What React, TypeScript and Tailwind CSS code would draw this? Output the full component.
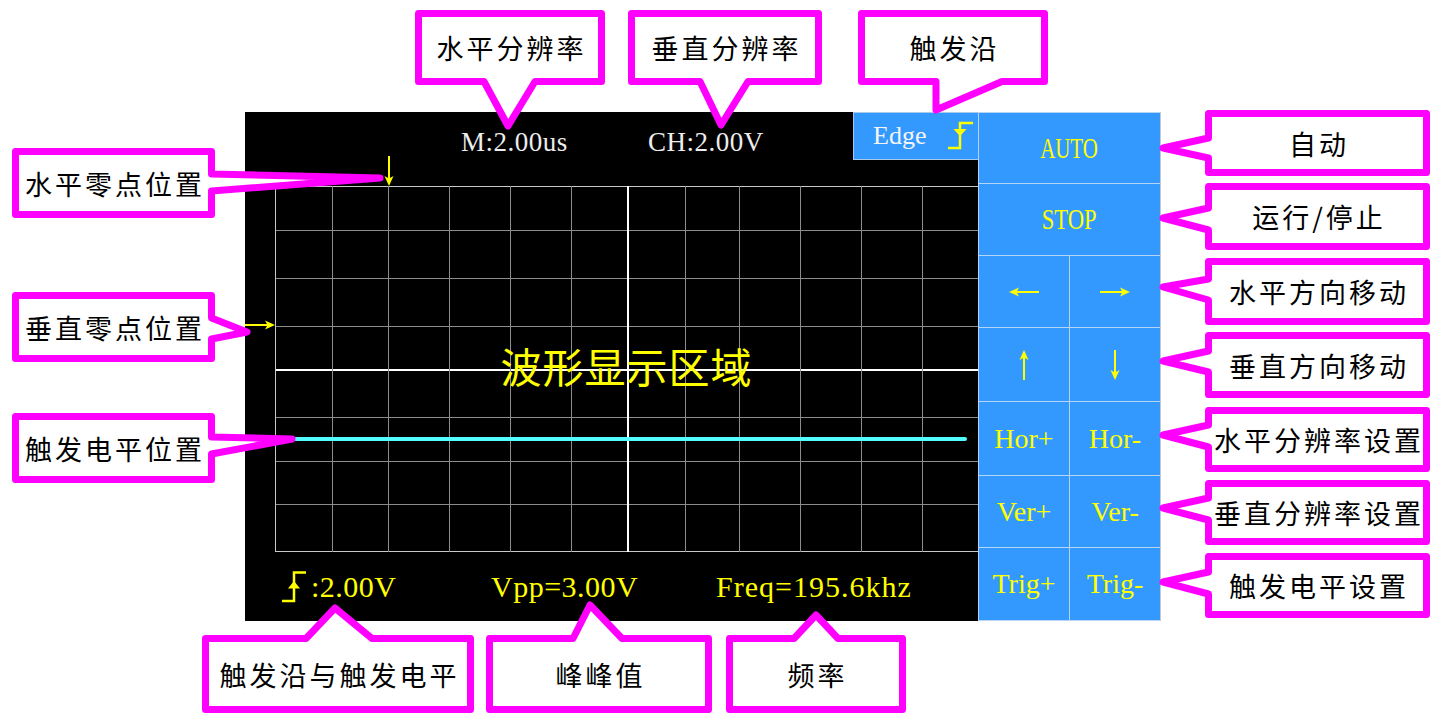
import React from "react";

type Side = "top" | "bottom" | "left" | "right";

type Callout = {
  text: string;
  x: number;
  y: number;
  w: number;
  h: number;
  pos: string;
  side: Side;
  b1: number;
  b2: number;
  tx: number;
  ty: number;
};

const callouts: Callout[] = [
  { text: "水平分辨率", x: 415, y: 10, w: 190, h: 75, pos: "left-[415px] top-[10px] w-[190px] h-[75px]", side: "bottom", b1: 484, b2: 535, tx: 508, ty: 126 },
  { text: "垂直分辨率", x: 628, y: 10, w: 194, h: 75, pos: "left-[628px] top-[10px] w-[194px] h-[75px]", side: "bottom", b1: 700, b2: 748, tx: 721, ty: 125 },
  { text: "触发沿", x: 858, y: 10, w: 190, h: 75, pos: "left-[858px] top-[10px] w-[190px] h-[75px]", side: "bottom", b1: 936, b2: 1002, tx: 936, ty: 110 },
  { text: "自动", x: 1205, y: 110, w: 225, h: 66, pos: "left-[1205px] top-[110px] w-[225px] h-[66px]", side: "left", b1: 138, b2: 158, tx: 1163, ty: 148 },
  { text: "运行/停止", x: 1205, y: 183, w: 225, h: 67, pos: "left-[1205px] top-[183px] w-[225px] h-[67px]", side: "left", b1: 208, b2: 230, tx: 1163, ty: 218 },
  { text: "水平方向移动", x: 1205, y: 258, w: 225, h: 67, pos: "left-[1205px] top-[258px] w-[225px] h-[67px]", side: "left", b1: 279, b2: 300, tx: 1163, ty: 287 },
  { text: "垂直方向移动", x: 1205, y: 332, w: 225, h: 66, pos: "left-[1205px] top-[332px] w-[225px] h-[66px]", side: "left", b1: 351, b2: 372, tx: 1163, ty: 361 },
  { text: "水平分辨率设置", x: 1205, y: 407, w: 225, h: 65, pos: "left-[1205px] top-[407px] w-[225px] h-[65px]", side: "left", b1: 425, b2: 447, tx: 1163, ty: 435 },
  { text: "垂直分辨率设置", x: 1205, y: 480, w: 225, h: 65, pos: "left-[1205px] top-[480px] w-[225px] h-[65px]", side: "left", b1: 498, b2: 520, tx: 1163, ty: 508 },
  { text: "触发电平设置", x: 1205, y: 553, w: 225, h: 65, pos: "left-[1205px] top-[553px] w-[225px] h-[65px]", side: "left", b1: 572, b2: 594, tx: 1163, ty: 582 },
  { text: "水平零点位置", x: 12, y: 148, w: 203, h: 70, pos: "left-[12px] top-[148px] w-[203px] h-[70px]", side: "right", b1: 174, b2: 191, tx: 380, ty: 178 },
  { text: "垂直零点位置", x: 12, y: 292, w: 203, h: 70, pos: "left-[12px] top-[292px] w-[203px] h-[70px]", side: "right", b1: 318, b2: 339, tx: 247, ty: 332 },
  { text: "触发电平位置", x: 12, y: 413, w: 203, h: 70, pos: "left-[12px] top-[413px] w-[203px] h-[70px]", side: "right", b1: 437, b2: 454, tx: 292, ty: 439 },
  { text: "触发沿与触发电平", x: 202, y: 635, w: 272, h: 78, pos: "left-[202px] top-[635px] w-[272px] h-[78px]", side: "top", b1: 306, b2: 372, tx: 335, ty: 608 },
  { text: "峰峰值", x: 486, y: 635, w: 226, h: 78, pos: "left-[486px] top-[635px] w-[226px] h-[78px]", side: "top", b1: 573, b2: 622, tx: 590, ty: 605 },
  { text: "频率", x: 726, y: 635, w: 180, h: 78, pos: "left-[726px] top-[635px] w-[180px] h-[78px]", side: "top", b1: 794, b2: 838, tx: 816, ty: 615 },
];

// outline of box + pointer, in the callout's own coordinates
function shape(c: Callout) {
  const s = 3.5;
  const L = s, T = s, R = c.w - s, B = c.h - s;
  const tx = c.tx - c.x, ty = c.ty - c.y;
  let pts: number[][] = [];
  if (c.side === "bottom") pts = [[L, T], [R, T], [R, B], [c.b2 - c.x, B], [tx, ty], [c.b1 - c.x, B], [L, B]];
  if (c.side === "top") pts = [[L, T], [c.b1 - c.x, T], [tx, ty], [c.b2 - c.x, T], [R, T], [R, B], [L, B]];
  if (c.side === "left") pts = [[L, T], [R, T], [R, B], [L, B], [L, c.b2 - c.y], [tx, ty], [L, c.b1 - c.y]];
  if (c.side === "right") pts = [[L, T], [R, T], [R, c.b1 - c.y], [tx, ty], [R, c.b2 - c.y], [R, B], [L, B]];
  return pts.map((p) => p.join(",")).join(" ");
}

const CalloutBox = ({ c }: { c: Callout }) => (
  <div className={`absolute ${c.pos}`}>
    <svg className="absolute left-0 top-0 overflow-visible" width={c.w} height={c.h}>
      <polygon points={shape(c)} fill="#ffffff" stroke="#ff00ff" strokeWidth="7" strokeLinejoin="round" />
    </svg>
    <div className="relative flex h-full items-center justify-center pl-[3px] text-[27px] leading-none tracking-[3px] text-black">
      {c.text}
    </div>
  </div>
);

const HArrow = ({ flip }: { flip?: boolean }) => (
  <svg width="30" height="12" viewBox="0 0 30 12" className={flip ? "rotate-180" : ""}>
    <line x1="5" y1="6" x2="30" y2="6" stroke="#ffff00" strokeWidth="2" />
    <polygon points="0,6 10,1.5 7.5,6 10,10.5" fill="#ffff00" />
  </svg>
);

const VArrow = ({ flip }: { flip?: boolean }) => (
  <svg width="12" height="30" viewBox="0 0 12 30" className={flip ? "rotate-180" : ""}>
    <line x1="6" y1="5" x2="6" y2="30" stroke="#ffff00" strokeWidth="2" />
    <polygon points="6,0 1.5,10 6,7.5 10.5,10" fill="#ffff00" />
  </svg>
);

const vLines = [0, 57, 113, 174, 235, 296, 352, 410, 464, 525, 586, 647];
const hLines = [0, 44, 92, 140, 183, 231, 275, 318, 365];

const Grid = () => (
  <svg width="703" height="366" viewBox="0 0 703 366" className="block">
    {hLines.map((y) => (
      <line
        key={"h" + y}
        x1={0}
        x2={703}
        y1={y === 183 ? 184 : y + 0.5}
        y2={y === 183 ? 184 : y + 0.5}
        stroke={y === 183 ? "#ffffff" : y === 0 || y === 365 ? "#c8c8c8" : "#8c8c8c"}
        strokeWidth={y === 183 ? 2 : 1}
      />
    ))}
    {vLines.map((x) => (
      <line
        key={"v" + x}
        x1={x === 352 ? 353 : x + 0.5}
        x2={x === 352 ? 353 : x + 0.5}
        y1={0}
        y2={366}
        stroke={x === 352 ? "#ffffff" : x === 0 ? "#c8c8c8" : "#8c8c8c"}
        strokeWidth={x === 352 ? 2 : 1}
      />
    ))}
    <line x1="21" y1="253" x2="690" y2="253" stroke="#52fcff" strokeWidth="4" strokeLinecap="round" />
  </svg>
);

const Screen = () => (
  <div className="flex h-[509px] w-[733px] flex-col bg-black font-['Liberation_Serif',serif]">
    <div className="relative flex h-[74px] items-start">
      <span className="ml-[216px] mt-[15px] w-[187px] text-[27px] leading-[30px] tracking-[0.5px] text-[#ededed]">M:2.00us</span>
      <span className="mt-[15px] text-[27px] leading-[30px] tracking-[0.5px] text-[#ededed]">CH:2.00V</span>
      <div className="ml-auto flex h-[48px] w-[125px] items-center border-y border-l border-[#a9c8ea] bg-[#3399ff] pl-[19px]">
        <span className="w-[74px] text-[26px] leading-none text-[#f4f4f4]">Edge</span>
        <svg width="28" height="30" viewBox="0 0 28 30">
          <polyline points="1,27 13,27 13,2 26,2" fill="none" stroke="#ffff00" strokeWidth="2.5" />
          <polygon points="6.5,8 19.5,8 13,15" fill="#ffff00" />
        </svg>
      </div>
      <div className="absolute left-[138px] top-[44px]">
        <VArrow flip />
      </div>
    </div>
    <div className="flex h-[366px]">
      <div className="w-[30px] pt-[133px]">
        <HArrow flip />
      </div>
      <div className="relative w-[703px]">
        <Grid />
        <div className="absolute inset-0 flex items-center justify-center pb-[8px] font-['Noto_Sans_CJK_SC',sans-serif] text-[41px] leading-none tracking-[1px] text-[#ffff00]">
          波形显示区域
        </div>
      </div>
    </div>
    <div className="flex h-[69px] items-center text-[30px] leading-none text-[#ffff00]">
      <div className="ml-[36px] flex w-[210px] items-center">
        <svg width="28" height="32" viewBox="0 0 28 32">
          <polyline points="1,30 13,30 13,1.5 25,1.5" fill="none" stroke="#ffff00" strokeWidth="2.5" />
          <polygon points="13,10 7,17.5 19,17.5" fill="#ffff00" />
        </svg>
        <span className="ml-[2px] tracking-[0.5px]">:2.00V</span>
      </div>
      <span className="w-[225px] tracking-[0.5px]">Vpp=3.00V</span>
      <span className="tracking-[1px]">Freq=195.6khz</span>
    </div>
  </div>
);

const Cell = ({ children, className = "" }: { children: React.ReactNode; className?: string }) => (
  <div className={`flex flex-1 items-center justify-center ${className}`}>{children}</div>
);

const Panel = () => (
  <div className="flex h-[509px] w-[183px] flex-col divide-y divide-[#b6d5f5] border border-[#b6d5f5] border-r-[#c8c8c8] bg-[#3399ff] font-['Liberation_Serif',serif] text-[28px] leading-none text-[#ffff00]">
    <Cell className="h-[71px] flex-none">
      <span className="inline-block scale-x-[0.72] text-[29px]">AUTO</span>
    </Cell>
    <Cell className="h-[72px] flex-none">
      <span className="inline-block scale-x-[0.78] text-[29px]">STOP</span>
    </Cell>
    <div className="flex h-[72px] divide-x divide-[#b6d5f5]">
      <Cell>
        <HArrow />
      </Cell>
      <Cell>
        <HArrow flip />
      </Cell>
    </div>
    <div className="flex h-[74px] divide-x divide-[#b6d5f5]">
      <Cell>
        <VArrow />
      </Cell>
      <Cell>
        <VArrow flip />
      </Cell>
    </div>
    <div className="flex h-[74px] divide-x divide-[#b6d5f5]">
      <Cell>Hor+</Cell>
      <Cell>Hor-</Cell>
    </div>
    <div className="flex h-[72px] divide-x divide-[#b6d5f5]">
      <Cell>Ver+</Cell>
      <Cell>Ver-</Cell>
    </div>
    <div className="flex h-[72px] divide-x divide-[#b6d5f5]">
      <Cell>Trig+</Cell>
      <Cell>Trig-</Cell>
    </div>
  </div>
);

export default function App() {
  return (
    <div className="relative h-[723px] w-[1444px] overflow-hidden bg-white font-['Noto_Sans_CJK_SC',sans-serif]">
      <div className="flex pl-[245px] pt-[112px]">
        <Screen />
        <Panel />
      </div>
      {callouts.map((c) => (
        <CalloutBox key={c.text} c={c} />
      ))}
    </div>
  );
}
